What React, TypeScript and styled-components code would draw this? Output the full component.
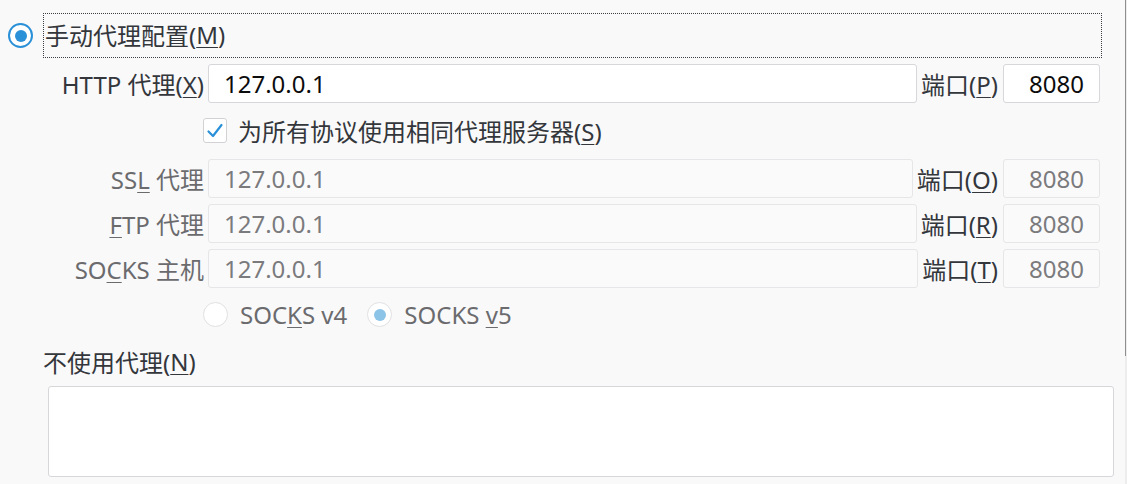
import React from "react";
import styled, { createGlobalStyle } from "styled-components";

const Global = createGlobalStyle`
  html, body { margin: 0; padding: 0; background: #f9f9fa; }
  body { font-family: "Noto Sans", "Noto Sans CJK SC", sans-serif; }
`;

const Page = styled.div`
  width: 1127px;
  height: 484px;
  overflow: hidden;
  display: flex;
  background: #f9f9fa;
  font-size: 24px;
  color: #33363b;
`;

const Content = styled.div`
  flex: 1;
  display: flex;
  flex-direction: column;
  padding-top: 13px;
`;

const ScrollTrack = styled.div`
  width: 2px;
  background: #ededed;
  display: flex;
  flex-direction: column;
`;

const ScrollThumb = styled.div`
  height: 356px;
  width: 1px;
  background: #8f8f8f;
`;

const ModeRow = styled.div`
  display: flex;
  align-items: center;
  padding-left: 8px;
  padding-right: 23px;
  gap: 10px;
`;

const Radio = styled.span<{ $checked?: boolean; $disabled?: boolean }>`
  width: 25px;
  height: 25px;
  box-sizing: border-box;
  border-radius: 50%;
  flex: none;
  background: #fff;
  border: ${(p) =>
    p.$disabled ? "1px solid #e1e1e3" : p.$checked ? "2px solid #2a90d8" : "1px solid #b1b1b3"};
  display: flex;
  align-items: center;
  justify-content: center;
  &::after {
    content: "";
    display: ${(p) => (p.$checked ? "block" : "none")};
    width: 12px;
    height: 12px;
    border-radius: 50%;
    background: ${(p) => (p.$disabled ? "#8cc4e8" : "#2a90d8")};
  }
`;

const FocusLabel = styled.div`
  flex: 1;
  height: 45px;
  box-sizing: border-box;
  border: 1px dotted #3a3d42;
  display: flex;
  align-items: center;
  padding-left: 1px;
  padding-bottom: 2px;
`;

const Key = styled.span`
  text-decoration: underline;
  text-underline-offset: 3px;
  text-decoration-thickness: 1px;
`;

const Rows = styled.div`
  display: flex;
  flex-direction: column;
  padding-left: 43px;
  padding-right: 25px;
  margin-top: 6px;
`;

const FieldRow = styled.div<{ $top?: number }>`
  display: flex;
  align-items: center;
  height: 39px;
  margin-top: ${(p) => p.$top ?? 6}px;
`;

const FieldLabel = styled.span<{ $disabled?: boolean }>`
  width: 161px;
  flex: none;
  text-align: right;
  margin-right: 4px;
  white-space: nowrap;
  color: ${(p) => (p.$disabled ? "#6b6b6e" : "#33363b")};
`;

const Input = styled.div<{ $disabled?: boolean; $port?: boolean }>`
  height: 39px;
  box-sizing: border-box;
  border: 1px solid ${(p) => (p.$disabled ? "#e6e6e8" : "#d7d7db")};
  border-radius: 3px;
  background: ${(p) => (p.$disabled ? "#fafafa" : "#ffffff")};
  color: ${(p) => (p.$disabled ? "#7b7b7e" : "#0c0c0d")};
  display: flex;
  align-items: center;
  justify-content: ${(p) => (p.$port ? "flex-end" : "flex-start")};
  padding: ${(p) => (p.$port ? "0 15px 1px 0" : "0 0 1px 15px")};
  flex: ${(p) => (p.$port ? "none" : "1")};
  width: ${(p) => (p.$port ? "97px" : "auto")};
  white-space: nowrap;
`;

const PortLabel = styled.span`
  margin: 0 5px 0 4px;
  white-space: nowrap;
  color: #33363b;
`;

const CheckRow = styled.div`
  display: flex;
  align-items: center;
  gap: 11px;
  padding-left: 160px;
  margin-top: 15px;
  height: 25px;
  margin-bottom: 10px;
`;

const Checkbox = styled.span`
  width: 24px;
  height: 25px;
  box-sizing: border-box;
  border: 1px solid #d2d2d5;
  border-radius: 3px;
  background: #fff;
  display: flex;
  align-items: center;
  justify-content: center;
  flex: none;
`;

const RadioRow = styled.div`
  display: flex;
  align-items: center;
  padding-left: 160px;
  margin-top: 14px;
  height: 25px;
`;

const RadioOption = styled.span`
  display: flex;
  align-items: center;
  gap: 12px;
  margin-right: 20px;
  color: #6b6b6e;
  white-space: nowrap;
`;

const NoProxyLabel = styled.div`
  padding-left: 43px;
  margin-top: 20px;
  height: 28px;
  display: flex;
  align-items: center;
`;

const TextArea = styled.div`
  margin: 11px 11px 0 48px;
  height: 91px;
  box-sizing: border-box;
  border: 1px solid #d7d7db;
  border-radius: 3px;
  background: #fff;
`;

const Check = () => (
  <svg width="18" height="18" viewBox="0 0 18 18">
    <path d="M2.5 9.5 L7 14 L15.5 3" fill="none" stroke="#2a90d8" strokeWidth="2.2" strokeLinecap="round" strokeLinejoin="round" />
  </svg>
);

const rows = [
  { label: ["SS", "L", " 代理"], port: ["端口(", "O", ")"] },
  { label: ["", "F", "TP 代理"], port: ["端口(", "R", ")"] },
  { label: ["SO", "C", "KS 主机"], port: ["端口(", "T", ")"] },
];

export default function App() {
  return (
    <Page>
      <Global />
      <Content>
        <ModeRow>
          <Radio $checked />
          <FocusLabel>
            手动代理配置(<Key>M</Key>)
          </FocusLabel>
        </ModeRow>
        <Rows>
          <FieldRow $top={0}>
            <FieldLabel>
              HTTP 代理(<Key>X</Key>)
            </FieldLabel>
            <Input>127.0.0.1</Input>
            <PortLabel>
              端口(<Key>P</Key>)
            </PortLabel>
            <Input $port>8080</Input>
          </FieldRow>
          <CheckRow>
            <Checkbox>
              <Check />
            </Checkbox>
            <span>
              为所有协议使用相同代理服务器(<Key>S</Key>)
            </span>
          </CheckRow>
          {rows.map((r, i) => (
            <FieldRow key={i} $top={6}>
              <FieldLabel $disabled>
                {r.label[0]}
                <Key>{r.label[1]}</Key>
                {r.label[2]}
              </FieldLabel>
              <Input $disabled>127.0.0.1</Input>
              <PortLabel>
                {r.port[0]}
                <Key>{r.port[1]}</Key>
                {r.port[2]}
              </PortLabel>
              <Input $disabled $port>
                8080
              </Input>
            </FieldRow>
          ))}
          <RadioRow>
            <RadioOption>
              <Radio $disabled />
              <span>
                SOC<Key>K</Key>S v4
              </span>
            </RadioOption>
            <RadioOption>
              <Radio $disabled $checked />
              <span>
                SOCKS <Key>v</Key>5
              </span>
            </RadioOption>
          </RadioRow>
        </Rows>
        <NoProxyLabel>
          不使用代理(<Key>N</Key>)
        </NoProxyLabel>
        <TextArea />
      </Content>
      <ScrollTrack>
        <ScrollThumb />
      </ScrollTrack>
    </Page>
  );
}
